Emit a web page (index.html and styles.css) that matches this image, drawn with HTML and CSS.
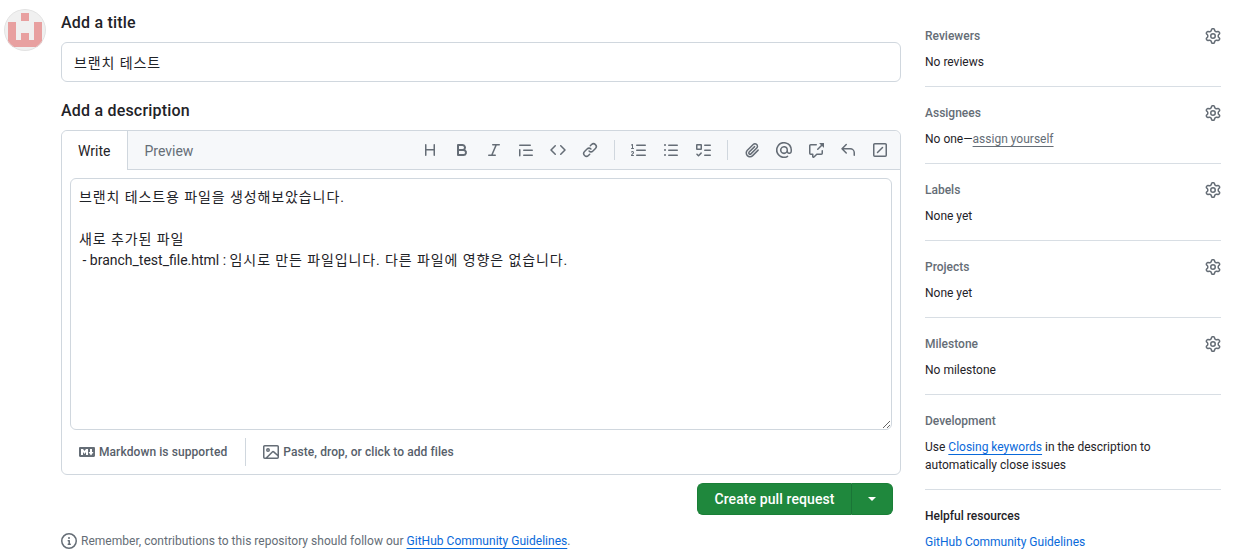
FILE: index.html
```html
<!DOCTYPE html>
<html lang="en">
<head>
    <meta charset="UTF-8">
    <title>Open a pull request</title>
    <link rel="stylesheet" href="styles.css">
</head>
<body>
    <svg class="sprite" xmlns="http://www.w3.org/2000/svg">
        <symbol id="i-gear" viewBox="0 0 16 16"><path d="M8 0a8.2 8.2 0 0 1 .701.031C9.444.095 9.99.645 10.16 1.29l.288 1.107c.018.066.079.158.212.224.231.114.454.243.668.386.123.082.233.09.299.071l1.103-.303c.644-.176 1.392.021 1.82.63.27.385.506.792.704 1.218.315.675.111 1.422-.364 1.891l-.814.806c-.049.048-.098.147-.088.294.016.257.016.515 0 .772-.01.147.038.246.088.294l.814.806c.475.469.679 1.216.364 1.891a7.977 7.977 0 0 1-.704 1.217c-.428.61-1.176.807-1.82.63l-1.102-.302c-.067-.019-.177-.011-.3.071a5.909 5.909 0 0 1-.668.386c-.133.066-.194.158-.211.224l-.29 1.106c-.168.646-.715 1.196-1.458 1.26a8.006 8.006 0 0 1-1.402 0c-.743-.064-1.289-.614-1.458-1.26l-.289-1.106c-.018-.066-.079-.158-.212-.224a5.738 5.738 0 0 1-.668-.386c-.123-.082-.233-.09-.299-.071l-1.103.303c-.644.176-1.392-.021-1.82-.63a8.12 8.12 0 0 1-.704-1.218c-.315-.675-.111-1.422.363-1.891l.815-.806c.05-.048.098-.147.088-.294a6.214 6.214 0 0 1 0-.772c.01-.147-.038-.246-.088-.294l-.815-.806C.635 6.045.431 5.298.746 4.623a7.92 7.92 0 0 1 .704-1.217c.428-.61 1.176-.807 1.82-.63l1.102.302c.067.019.177.011.3-.071.214-.143.437-.272.668-.386.133-.066.194-.158.211-.224l.29-1.106C6.009.645 6.556.095 7.299.03 7.53.01 7.764 0 8 0Zm-.571 1.525c-.036.003-.108.036-.137.146l-.289 1.105c-.147.561-.549.967-.998 1.189-.173.086-.34.183-.5.29-.417.278-.97.423-1.529.27l-1.103-.303c-.109-.03-.175.016-.195.045-.22.312-.412.644-.573.99-.014.031-.021.11.059.19l.815.806c.411.406.562.957.53 1.456a4.709 4.709 0 0 0 0 .582c.032.499-.119 1.05-.53 1.456l-.815.806c-.081.08-.073.159-.059.19.162.346.353.677.573.989.02.03.085.076.195.046l1.102-.303c.56-.153 1.113-.008 1.53.27.161.107.328.204.501.29.447.222.85.629.997 1.189l.289 1.105c.029.109.101.143.137.146a6.6 6.6 0 0 0 1.142 0c.036-.003.108-.036.137-.146l.289-1.105c.147-.561.549-.967.998-1.189.173-.086.34-.183.5-.29.417-.278.97-.423 1.529-.27l1.103.303c.109.029.175-.016.195-.045.22-.313.411-.644.573-.99.014-.031.021-.11-.059-.19l-.815-.806c-.411-.406-.562-.957-.53-1.456a4.709 4.709 0 0 0 0-.582c-.032-.499.119-1.05.53-1.456l.815-.806c.081-.08.073-.159.059-.19a6.464 6.464 0 0 0-.573-.989c-.02-.03-.085-.076-.195-.046l-1.102.303c-.56.153-1.113.008-1.53-.27a4.44 4.44 0 0 0-.501-.29c-.447-.222-.85-.629-.997-1.189l-.289-1.105c-.029-.11-.101-.143-.137-.146a6.6 6.6 0 0 0-1.142 0ZM11 8a3 3 0 1 1-6 0 3 3 0 0 1 6 0ZM9.5 8a1.5 1.5 0 1 0-3.001.001A1.5 1.5 0 0 0 9.5 8Z"/></symbol>
    </svg>

    <div class="page">
        <svg class="avatar" viewBox="0 0 42 42" aria-hidden="true">
            <rect width="42" height="42" fill="#f0f0f0"/>
            <path fill="#e8a0a0" d="M17 4h8v8h-8zM4 13h8v18h5v-7h8v7h5V13h8v25H4z"/>
            <circle cx="21" cy="21" r="20.5" fill="none" stroke="#e2e2e2"/>
        </svg>

        <main class="main">
            <label class="field-label">Add a title</label>
            <input class="title-input" type="text" value="브랜치 테스트">

            <label class="field-label desc-label">Add a description</label>
            <div class="editor">
                <div class="editor-head">
                    <div class="tab tab-active">Write</div>
                    <div class="tab">Preview</div>
                    <div class="toolbar">
                        <button class="tool"><svg viewBox="0 0 16 16"><path d="M3.75 2a.75.75 0 0 1 .75.75V7h7V2.75a.75.75 0 0 1 1.5 0v10.5a.75.75 0 0 1-1.5 0V8.5h-7v4.75a.75.75 0 0 1-1.5 0V2.75A.75.75 0 0 1 3.75 2Z"/></svg></button>
                        <button class="tool"><svg viewBox="0 0 16 16"><path d="M4 2h4.5a3.501 3.501 0 0 1 2.852 5.53A3.499 3.499 0 0 1 9.5 14H4a1 1 0 0 1-1-1V3a1 1 0 0 1 1-1Zm1 7v3h4.5a1.5 1.5 0 0 0 0-3Zm3.5-2a1.5 1.5 0 0 0 0-3H5v3Z"/></svg></button>
                        <button class="tool"><svg viewBox="0 0 16 16"><path d="M6 2.75A.75.75 0 0 1 6.75 2h6.5a.75.75 0 0 1 0 1.5h-2.505l-3.858 9H9.25a.75.75 0 0 1 0 1.5h-6.5a.75.75 0 0 1 0-1.5h2.505l3.858-9H6.75A.75.75 0 0 1 6 2.75Z"/></svg></button>
                        <button class="tool"><svg viewBox="0 0 16 16"><path d="M1.75 2.5h10.5a.75.75 0 0 1 0 1.5H1.75a.75.75 0 0 1 0-1.5Zm4 5h8.5a.75.75 0 0 1 0 1.5h-8.5a.75.75 0 0 1 0-1.5Zm0 5h8.5a.75.75 0 0 1 0 1.5h-8.5a.75.75 0 0 1 0-1.5ZM2.5 7.75v6a.75.75 0 0 1-1.5 0v-6a.75.75 0 0 1 1.5 0Z"/></svg></button>
                        <button class="tool"><svg viewBox="0 0 16 16"><path d="m11.28 3.22 4.25 4.25a.75.75 0 0 1 0 1.06l-4.25 4.25a.749.749 0 0 1-1.275-.326.749.749 0 0 1 .215-.734L13.94 8l-3.72-3.72a.749.749 0 0 1 .326-1.275.749.749 0 0 1 .734.215Zm-6.56 0a.751.751 0 0 1 1.042.018.751.751 0 0 1 .018 1.042L2.06 8l3.72 3.72a.749.749 0 0 1-.326 1.275.749.749 0 0 1-.734-.215L.47 8.53a.75.75 0 0 1 0-1.06Z"/></svg></button>
                        <button class="tool"><svg viewBox="0 0 16 16"><path d="m7.775 3.275 1.25-1.25a3.5 3.5 0 1 1 4.95 4.95l-2.5 2.5a3.5 3.5 0 0 1-4.95 0 .751.751 0 0 1 .018-1.042.751.751 0 0 1 1.042-.018 1.998 1.998 0 0 0 2.83 0l2.5-2.5a2.002 2.002 0 0 0-2.83-2.83l-1.25 1.25a.751.751 0 0 1-1.042-.018.751.751 0 0 1-.018-1.042Zm-4.69 9.64a1.998 1.998 0 0 0 2.83 0l1.25-1.25a.751.751 0 0 1 1.042.018.751.751 0 0 1 .018 1.042l-1.25 1.25a3.5 3.5 0 1 1-4.95-4.95l2.5-2.5a3.5 3.5 0 0 1 4.95 0 .751.751 0 0 1-.018 1.042.751.751 0 0 1-1.042.018 1.998 1.998 0 0 0-2.83 0l-2.5 2.5a1.998 1.998 0 0 0 0 2.83Z"/></svg></button>
                        <span class="tool-sep"></span>
                        <button class="tool"><svg viewBox="0 0 16 16"><path d="M5 3.25a.75.75 0 0 1 .75-.75h8.5a.75.75 0 0 1 0 1.5h-8.5A.75.75 0 0 1 5 3.25Zm0 5a.75.75 0 0 1 .75-.75h8.5a.75.75 0 0 1 0 1.5h-8.5A.75.75 0 0 1 5 8.25Zm0 5a.75.75 0 0 1 .75-.75h8.5a.75.75 0 0 1 0 1.5h-8.5a.75.75 0 0 1-.75-.75ZM.924 10.32a.5.5 0 0 1-.851-.525l.001-.001.001-.002.002-.004.007-.011c.097-.144.215-.273.348-.384.228-.19.588-.392 1.068-.392.468 0 .858.181 1.126.484.259.294.377.673.377 1.038 0 .987-.686 1.495-1.156 1.845l-.047.035c-.303.225-.522.4-.654.597h1.357a.5.5 0 0 1 0 1H.5a.5.5 0 0 1-.5-.5c0-1.005.692-1.52 1.167-1.875l.035-.025c.531-.396.8-.625.8-1.078a.57.57 0 0 0-.128-.376C1.806 10.068 1.695 10 1.5 10a.658.658 0 0 0-.429.163.835.835 0 0 0-.144.153ZM2.003 2.5V6h.503a.5.5 0 0 1 0 1H.5a.5.5 0 0 1 0-1h.503V3.308l-.28.14a.5.5 0 0 1-.446-.895l1.003-.5a.5.5 0 0 1 .723.447Z"/></svg></button>
                        <button class="tool"><svg viewBox="0 0 16 16"><path d="M5.75 2.5h8.5a.75.75 0 0 1 0 1.5h-8.5a.75.75 0 0 1 0-1.5Zm0 5h8.5a.75.75 0 0 1 0 1.5h-8.5a.75.75 0 0 1 0-1.5Zm0 5h8.5a.75.75 0 0 1 0 1.5h-8.5a.75.75 0 0 1 0-1.5ZM2 14a1 1 0 1 1 0-2 1 1 0 0 1 0 2Zm1-6a1 1 0 1 1-2 0 1 1 0 0 1 2 0ZM2 4a1 1 0 1 1 0-2 1 1 0 0 1 0 2Z"/></svg></button>
                        <button class="tool"><svg viewBox="0 0 16 16"><path d="M2 2h4a1 1 0 0 1 1 1v4a1 1 0 0 1-1 1H2a1 1 0 0 1-1-1V3a1 1 0 0 1 1-1Zm4.655 8.595a.75.75 0 0 1 0 1.06L4.03 14.28a.75.75 0 0 1-1.06 0l-1.5-1.5a.749.749 0 0 1 .326-1.275.749.749 0 0 1 .734.215l.97.97 2.095-2.095a.75.75 0 0 1 1.06 0ZM9.75 2.5h5.5a.75.75 0 0 1 0 1.5h-5.5a.75.75 0 0 1 0-1.5Zm0 5h5.5a.75.75 0 0 1 0 1.5h-5.5a.75.75 0 0 1 0-1.5Zm0 5h5.5a.75.75 0 0 1 0 1.5h-5.5a.75.75 0 0 1 0-1.5Zm-7.25-9v3h3v-3Z"/></svg></button>
                        <span class="tool-sep"></span>
                        <button class="tool"><svg viewBox="0 0 16 16"><path d="M12.212 3.02a1.753 1.753 0 0 0-2.478.003l-5.83 5.83a3.007 3.007 0 0 0-.88 2.127c0 .795.315 1.551.88 2.116.567.567 1.333.89 2.126.89.79 0 1.548-.321 2.116-.89l5.48-5.48a.75.75 0 0 1 1.061 1.06l-5.48 5.48a4.492 4.492 0 0 1-3.177 1.33c-1.2 0-2.345-.487-3.187-1.33a4.483 4.483 0 0 1-1.32-3.177c0-1.195.475-2.341 1.32-3.186l5.83-5.83a3.25 3.25 0 0 1 5.553 2.297c0 .863-.343 1.691-.953 2.301L7.439 12.39c-.375.377-.884.59-1.416.593a1.998 1.998 0 0 1-1.412-.593 1.992 1.992 0 0 1 0-2.828l5.48-5.48a.751.751 0 0 1 1.042.018.751.751 0 0 1 .018 1.042l-5.48 5.48a.492.492 0 0 0 0 .707.499.499 0 0 0 .352.154.51.51 0 0 0 .356-.154l5.833-5.827a1.755 1.755 0 0 0 0-2.481Z"/></svg></button>
                        <button class="tool"><svg viewBox="0 0 16 16"><path d="M4.75 2.37a6.501 6.501 0 0 0 6.5 11.26.75.75 0 0 1 .75 1.298A7.999 7.999 0 0 1 .989 4.148 8 8 0 0 1 16 7.75v1.5a2.75 2.75 0 0 1-5.072 1.475 3.999 3.999 0 0 1-6.65-4.19A4 4 0 0 1 12 8v1.25a1.25 1.25 0 0 0 2.5 0V7.867a6.5 6.5 0 0 0-9.75-5.496ZM10.5 8a2.5 2.5 0 1 0-5 0 2.5 2.5 0 0 0 5 0Z"/></svg></button>
                        <button class="tool"><svg viewBox="0 0 16 16"><path d="M2.75 3.5a.25.25 0 0 0-.25.25v7.5c0 .138.112.25.25.25h2a.75.75 0 0 1 .75.75v2.19l2.72-2.72a.749.749 0 0 1 .53-.22h4.5a.25.25 0 0 0 .25-.25v-2.5a.75.75 0 0 1 1.5 0v2.5A1.75 1.75 0 0 1 13.25 13H9.06l-2.573 2.573A1.458 1.458 0 0 1 4 14.543V13H2.75A1.75 1.75 0 0 1 1 11.25v-7.5C1 2.784 1.784 2 2.75 2h5.5a.75.75 0 0 1 0 1.5ZM16 1.25v4.146a.25.25 0 0 1-.427.177L14.03 4.03l-3.75 3.75a.749.749 0 0 1-1.275-.326.749.749 0 0 1 .215-.734l3.75-3.75-1.543-1.543A.25.25 0 0 1 11.604 1h4.146a.25.25 0 0 1 .25.25Z"/></svg></button>
                        <button class="tool"><svg viewBox="0 0 16 16"><path d="M6.78 1.97a.75.75 0 0 1 0 1.06L3.81 6h6.44A4.75 4.75 0 0 1 15 10.75v2.5a.75.75 0 0 1-1.5 0v-2.5a3.25 3.25 0 0 0-3.25-3.25H3.81l2.97 2.97a.749.749 0 0 1-.326 1.275.749.749 0 0 1-.734-.215L1.47 7.28a.75.75 0 0 1 0-1.06l4.25-4.25a.75.75 0 0 1 1.06 0Z"/></svg></button>
                        <button class="tool"><svg viewBox="0 0 16 16"><path d="M2.75 1h10.5c.966 0 1.75.784 1.75 1.75v10.5A1.75 1.75 0 0 1 13.25 15H2.75A1.75 1.75 0 0 1 1 13.25V2.75C1 1.784 1.784 1 2.75 1ZM2.5 2.75v10.5c0 .138.112.25.25.25h10.5a.25.25 0 0 0 .25-.25V2.75a.25.25 0 0 0-.25-.25H2.75a.25.25 0 0 0-.25.25ZM11.03 4.97a.75.75 0 0 1 0 1.06l-5 5a.75.75 0 0 1-1.06-1.06l5-5a.75.75 0 0 1 1.06 0Z"/></svg></button>
                    </div>
                </div>

                <div class="editor-body">
                    <div class="editor-text"><span class="ko">브랜치 테스트용 파일을 생성해보았습니다.</span>

<span class="ko">새로 추가된 파일</span>
 - branch_test_file.html : <span class="ko">임시로 만든 파일입니다. 다른 파일에 영향은 없습니다.</span></div>
                </div>

                <div class="editor-foot">
                    <span class="foot-item">
                        <svg viewBox="0 0 16 16"><path d="M14.85 3c.63 0 1.15.52 1.14 1.15v7.7c0 .63-.51 1.15-1.15 1.15H1.15C.52 13 0 12.48 0 11.84V4.15C0 3.52.52 3 1.15 3ZM9 11V5H7L5.5 7 4 5H2v6h2V8l1.5 1.92L7 8v3Zm2.99.5L14.5 8H13V5h-2v3H9.5Z"/></svg>
                        Markdown is supported
                    </span>
                    <span class="foot-sep"></span>
                    <span class="foot-item">
                        <svg viewBox="0 0 16 16"><path d="M16 13.25A1.75 1.75 0 0 1 14.25 15H1.75A1.75 1.75 0 0 1 0 13.25V2.75C0 1.784.784 1 1.75 1h12.5c.966 0 1.75.784 1.75 1.75ZM1.75 2.5a.25.25 0 0 0-.25.25v10.5c0 .138.112.25.25.25h.94l.03-.03 6.077-6.078a1.75 1.75 0 0 1 2.412-.06L14.5 10.31V2.75a.25.25 0 0 0-.25-.25Zm12.5 11a.25.25 0 0 0 .25-.25v-.917l-4.298-3.889a.25.25 0 0 0-.344.009L4.81 13.5ZM7 6a2 2 0 1 1-3.999.001A2 2 0 0 1 7 6ZM5.5 6a.5.5 0 1 0-1 0 .5.5 0 0 0 1 0Z"/></svg>
                        Paste, drop, or click to add files
                    </span>
                </div>
            </div>

            <div class="actions">
                <div class="split-btn">
                    <button class="btn-main">Create pull request</button>
                    <button class="btn-caret"><span class="caret"></span></button>
                </div>
            </div>

            <p class="note">
                <svg viewBox="0 0 16 16"><path d="M0 8a8 8 0 1 1 16 0A8 8 0 0 1 0 8Zm8-6.5a6.5 6.5 0 1 0 0 13 6.5 6.5 0 0 0 0-13ZM6.5 7.75A.75.75 0 0 1 7.25 7h1a.75.75 0 0 1 .75.75v2.75h.25a.75.75 0 0 1 0 1.5h-2a.75.75 0 0 1 0-1.5h.25v-2h-.25a.75.75 0 0 1-.75-.75ZM8 6a1 1 0 1 1 0-2 1 1 0 0 1 0 2Z"/></svg>
                <span>Remember, contributions to this repository should follow our <a href="#">GitHub Community Guidelines</a>.</span>
            </p>
        </main>

        <aside class="sidebar">
            <section class="side-item">
                <div class="side-head">Reviewers <svg class="gear"><use href="#i-gear"/></svg></div>
                <div class="side-text">No reviews</div>
            </section>
            <section class="side-item">
                <div class="side-head">Assignees <svg class="gear"><use href="#i-gear"/></svg></div>
                <div class="side-text">No one—<a class="muted-link" href="#">assign yourself</a></div>
            </section>
            <section class="side-item">
                <div class="side-head">Labels <svg class="gear"><use href="#i-gear"/></svg></div>
                <div class="side-text">None yet</div>
            </section>
            <section class="side-item">
                <div class="side-head">Projects <svg class="gear"><use href="#i-gear"/></svg></div>
                <div class="side-text">None yet</div>
            </section>
            <section class="side-item">
                <div class="side-head">Milestone <svg class="gear"><use href="#i-gear"/></svg></div>
                <div class="side-text">No milestone</div>
            </section>
            <section class="side-item">
                <div class="side-head">Development</div>
                <div class="side-text">Use <a class="blue-link" href="#">Closing keywords</a> in the description to<br>automatically close issues</div>
            </section>
            <section class="side-item side-last">
                <div class="side-head side-head-dark">Helpful resources</div>
                <div class="side-text"><a class="plain-link" href="#">GitHub Community Guidelines</a></div>
            </section>
        </aside>
    </div>
</body>
</html>
```

FILE: styles.css
```css
html, body {
    margin: 0;
    padding: 0;
    height: 100%;
    overflow: hidden;
    background: #fff;
}
body {
    font-family: Roboto, "Noto Sans CJK KR", sans-serif;
    font-size: 14px;
    color: #1f2328;
}
.sprite {
    display: none;
}
.page {
    display: flex;
    align-items: flex-start;
    padding-left: 4px;
}
.avatar {
    width: 42px;
    height: 42px;
    flex: none;
    margin: 9px 15px 0 0;
    border-radius: 50%;
}
.main {
    width: 840px;
    flex: none;
    padding-top: 12px;
}
.field-label {
    display: block;
    font-size: 16px;
    font-weight: 500;
    line-height: 22px;
    letter-spacing: .2px;
}
.title-input {
    display: block;
    box-sizing: border-box;
    width: 100%;
    height: 40px;
    margin-top: 8px;
    padding: 0 12px;
    border: 1px solid #d0d7de;
    border-radius: 6px;
    font: 14px Roboto, "Noto Sans CJK KR", sans-serif;
    letter-spacing: .9px;
    color: #1f2328;
}
.desc-label {
    margin-top: 18px;
}
.editor {
    margin-top: 8px;
    border: 1px solid #d0d7de;
    border-radius: 6px;
}
.editor-head {
    display: flex;
    height: 39px;
    box-sizing: border-box;
    background: #f6f8fa;
    border-bottom: 1px solid #d0d7de;
    border-radius: 6px 6px 0 0;
}
.tab {
    height: 39px;
    box-sizing: border-box;
    padding: 0 16px;
    line-height: 40px;
    color: #656d76;
}
.tab-active {
    padding: 0 17px 0 16px;
    background: #fff;
    color: #1f2328;
    border-right: 1px solid #d0d7de;
    border-radius: 6px 0 0 0;
}
.toolbar {
    display: flex;
    align-items: center;
    margin-left: auto;
    padding-right: 4px;
}
.tool {
    display: flex;
    align-items: center;
    justify-content: center;
    width: 32px;
    height: 32px;
    padding: 0;
    border: 0;
    background: none;
}
.tool svg {
    width: 16px;
    height: 16px;
    fill: #656d76;
}
.tool-sep {
    width: 1px;
    height: 20px;
    margin: 0 8px;
    background: #d0d7de;
}
.editor-body {
    padding: 8px 8px 0;
}
.editor-text {
    box-sizing: border-box;
    width: 100%;
    height: 252px;
    padding: 8px;
    border: 1px solid #d0d7de;
    border-radius: 6px;
    line-height: 21px;
    white-space: pre-wrap;
    overflow: auto;
    resize: vertical;
}
.ko {
    letter-spacing: .9px;
}
.editor-foot {
    display: flex;
    align-items: center;
    height: 44px;
    padding-left: 17px;
    font-size: 12px;
    font-weight: 500;
    letter-spacing: .08px;
    color: #57606a;
}
.foot-item {
    display: flex;
    align-items: center;
    gap: 4px;
}
.foot-item svg {
    width: 16px;
    height: 16px;
    fill: #656d76;
}
.foot-sep {
    width: 1px;
    height: 28px;
    margin: 0 17px 0 18px;
    background: #d0d7de;
}
.actions {
    display: flex;
    justify-content: flex-end;
    margin-top: 8px;
    padding-right: 8px;
}
.split-btn {
    display: flex;
    height: 32px;
}
.btn-main,
.btn-caret {
    height: 32px;
    border: 1px solid #1a7f37;
    background: #1f883d;
    color: #fff;
    font: 500 14px Roboto, sans-serif;
}
.btn-main {
    width: 155px;
    padding: 0;
    letter-spacing: .1px;
    border-right: 1px solid #1a7537;
    border-radius: 6px 0 0 6px;
}
.btn-caret {
    display: flex;
    align-items: center;
    justify-content: center;
    width: 41px;
    padding: 0;
    border-left: 0;
    border-radius: 0 6px 6px 0;
}
.caret {
    width: 0;
    height: 0;
    border: 4px solid transparent;
    border-top-color: #fff;
    border-bottom: 0;
}
.note {
    display: flex;
    align-items: center;
    gap: 4px;
    margin: 17px 0 0;
    font-size: 12px;
    line-height: 18px;
    letter-spacing: .02px;
    color: #656d76;
}
.note svg {
    width: 16px;
    height: 16px;
    flex: none;
    fill: #656d76;
}
.note a,
.blue-link {
    color: #0969da;
    text-decoration: underline;
    text-underline-offset: 3px;
}
.sidebar {
    width: 296px;
    flex: none;
    margin-left: 24px;
    padding-top: 10px;
    font-size: 12px;
}
.side-item {
    padding: 16px 0 15px;
    border-bottom: 1px solid #d8dee4;
}
.side-last {
    border-bottom: 0;
}
.side-head {
    display: flex;
    align-items: center;
    justify-content: space-between;
    height: 20px;
    margin-bottom: 7px;
    font-weight: 500;
    color: #656d76;
}
.side-head-dark {
    color: #1f2328;
}
.side-text {
    line-height: 18px;
}
.gear {
    width: 16px;
    height: 16px;
    fill: #656d76;
}
.muted-link {
    color: #656d76;
    text-decoration: underline;
    text-underline-offset: 3px;
}
.plain-link {
    color: #0969da;
    text-decoration: none;
}
```
